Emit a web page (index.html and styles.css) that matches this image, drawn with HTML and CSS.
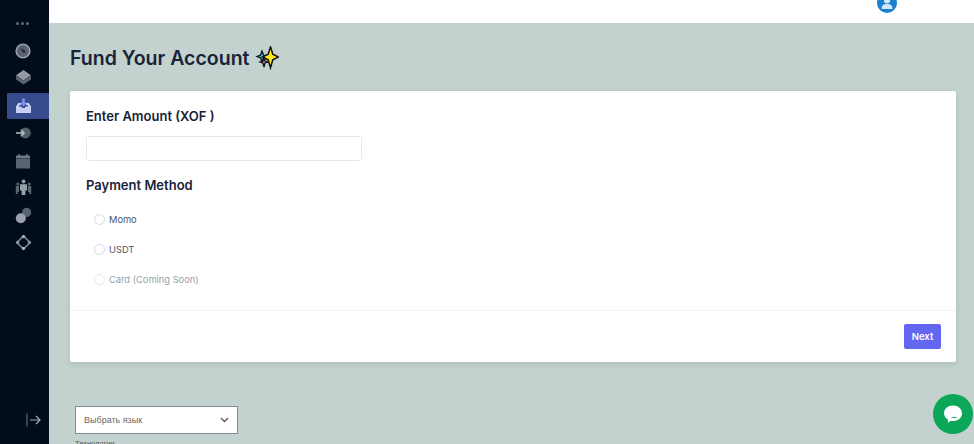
FILE: index.html
```html
<!DOCTYPE html>
<html lang="en">
<head>
    <meta charset="UTF-8">
    <meta name="viewport" content="width=device-width, initial-scale=1.0">
    <title>Fund Your Account</title>
    <link rel="stylesheet" href="styles.css">
</head>
<body>
    <aside class="sidebar">
        <div class="dots"><span></span><span></span><span></span></div>
        <nav class="nav">
            <a class="nav-item">
                <svg width="16" height="16" viewBox="0 0 16 16"><circle cx="8" cy="8" r="6.8" fill="#59626e" stroke="#98a1ab" stroke-width="1.6"/><path d="M5.5 5.2 9.6 7.2 10.4 10 7.6 9.2Z" fill="#1f2a38"/></svg>
            </a>
            <a class="nav-item">
                <svg width="17" height="17" viewBox="0 0 17 17"><path d="M8.5 1 16 6.2 8.5 11.4 1 6.2Z" fill="#929ba6"/><path d="M1 6.6 8.5 11.6 16 6.6V10.4L8.5 15.6 1 10.4Z" fill="#5a6470"/></svg>
            </a>
            <a class="nav-item active">
                <svg width="17" height="16" viewBox="0 0 17 16"><path d="M1 8.5 3.2 5H6V7H4.5L3.8 8.5H6.2L7.2 10H9.8L10.8 8.5H13.2L12.5 7H11V5H13.8L16 8.5V15H1Z" fill="#c9d0f5"/><path d="M7.2 0.5H9.8V4.5H12L8.5 8.5 5 4.5H7.2Z" fill="#7f90ee"/></svg>
            </a>
            <a class="nav-item">
                <svg width="17" height="14" viewBox="0 0 17 14"><circle cx="10.5" cy="7" r="5.4" fill="#545e6a"/><path d="M1 7H9M6 3.8 9.2 7 6 10.2" fill="none" stroke="#b4bbc4" stroke-width="1.5"/></svg>
            </a>
            <a class="nav-item">
                <svg width="16" height="16" viewBox="0 0 16 16"><path d="M1 2.5H3.5V1H5V2.5H11V1H12.5V2.5H15V5.4H1Z" fill="#717a86"/><rect x="1" y="6" width="14" height="9.5" fill="#5a6470"/></svg>
            </a>
            <a class="nav-item">
                <svg width="17" height="17" viewBox="0 0 17 17"><circle cx="8.5" cy="2.4" r="2" fill="#8f98a3"/><circle cx="2.8" cy="5" r="1.5" fill="#5d6773"/><circle cx="14.2" cy="5" r="1.5" fill="#5d6773"/><path d="M0.8 7H4V13H2.6V15H0.8Z M12.9 7H16.2V15H14.4V13H12.9Z" fill="#5d6773"/><path d="M5 5.2H12V11.5H10.4V16H6.6V11.5H5Z" fill="#98a1ab"/></svg>
            </a>
            <a class="nav-item">
                <svg width="17" height="17" viewBox="0 0 17 17"><circle cx="11.6" cy="5.4" r="4.6" fill="#59636f"/><circle cx="5.8" cy="11.2" r="5" fill="#98a1ab"/></svg>
            </a>
            <a class="nav-item">
                <svg width="17" height="17" viewBox="0 0 17 17"><path d="M8.5 2 15 8.5 8.5 15 2 8.5Z" fill="none" stroke="#7d8691" stroke-width="1.6"/><circle cx="8.5" cy="2.6" r="1.7" fill="#aab2bb"/><circle cx="2.6" cy="8.5" r="1.7" fill="#8d96a1"/><circle cx="14.4" cy="8.5" r="1.7" fill="#8d96a1"/><circle cx="8.5" cy="14.4" r="1.7" fill="#aab2bb"/></svg>
            </a>
        </nav>
        <div class="collapse">
            <svg width="16" height="14" viewBox="0 0 16 14"><path d="M1 0.5V13.5" stroke="#5f6a78" stroke-width="1.2"/><path d="M4 7H14M10 3 14 7 10 11" fill="none" stroke="#a3abb5" stroke-width="1.2"/></svg>
        </div>
    </aside>

    <div class="page">
        <header class="topbar">
            <div class="avatar">
                <svg width="20" height="20" viewBox="0 0 20 20"><circle cx="10" cy="10" r="10" fill="#1a80d0"/><circle cx="10" cy="7.5" r="3" fill="#d6e6f4"/><path d="M4.5 16C4.5 12 7 11 10 11S15.500 12 15.500 16Z" fill="#d6e6f4"/></svg>
            </div>
        </header>

        <main class="content">
            <h1 class="title">Fund Your Account
                <svg class="sparkle" width="24" height="24" viewBox="0 0 24 24"><path d="M7 5 8.500 9 12 10.500 8.500 12 7 16 5.500 12 2 10.500 5.500 9Z" fill="#35b8e8" stroke="#111" stroke-width="1.300"/><path d="M9 12 10 15 13 16 10 17 9 21 8 17 5 16 8 15Z" fill="#ea86b8" stroke="#111" stroke-width="1.300"/><path d="M15.500 0.800 17.800 8.200 23.500 11 17.800 13.800 15.500 21.800 13.200 13.800 7.500 11 13.200 8.200Z" fill="#ffe81f" stroke="#111" stroke-width="1.500"/></svg>
            </h1>

            <section class="card">
                <div class="card-body">
                    <h2 class="label">Enter Amount (XOF )</h2>
                    <input class="amount" type="text">
                    <h2 class="label method">Payment Method</h2>
                    <div class="options">
                        <label class="option"><span class="radio"></span>Momo</label>
                        <label class="option"><span class="radio"></span>USDT</label>
                        <label class="option disabled"><span class="radio"></span>Card (Coming Soon)</label>
                    </div>
                </div>
                <div class="card-footer">
                    <button class="next">Next</button>
                </div>
            </section>

            <div class="lang">
                <div class="select">
                    <span>Выбрать язык</span>
                    <svg width="9" height="6" viewBox="0 0 9 6"><path d="M1 1 4.500 4.500 8 1" fill="none" stroke="#555" stroke-width="1.300"/></svg>
                </div>
                <div class="powered">Технологии</div>
            </div>
        </main>
    </div>

    <div class="chat">
        <svg width="24" height="24" viewBox="0 0 24 24"><path d="M12 3.500C17 3.500 21 6.800 21 11.200S17.300 19 12 19C11.200 19 10.500 18.900 9.800 18.700L6.800 20.800 7 17.400C4.500 16 3 13.800 3 11.200 3 6.800 7 3.500 12 3.500Z" fill="#fff"/><path d="M10 15H16C15 16.300 11.500 16.300 10 15Z" fill="#0aa858"/></svg>
    </div>
</body>
</html>
```

FILE: styles.css
```css
* {
    box-sizing: border-box;
}
html, body {
    height: 444px;
    overflow: hidden;
}
body {
    margin: 0;
    display: flex;
    background-color: #c3d2cf;
    font-family: Inter, "Liberation Sans", sans-serif;
    color: #1a2338;
}
.sidebar {
    width: 49px;
    height: 444px;
    flex-shrink: 0;
    background-color: #020c1a;
    padding-top: 22px;
    padding-left: 7px;
    display: flex;
    flex-direction: column;
}
.dots {
    height: 3px;
    margin-left: 9px;
    display: flex;
    gap: 2px;
}
.dots span {
    width: 3px;
    height: 3px;
    border-radius: 50%;
    background-color: #5b6b80;
}
.nav {
    margin-top: 12px;
    display: flex;
    flex-direction: column;
}
.nav-item {
    height: 27.3px;
    width: 42px;
    padding-right: 10px;
    display: flex;
    align-items: center;
    justify-content: center;
}
.nav-item.active {
    height: 26px;
    margin: 1px 0;
    background-color: #364a8c;
    border-radius: 1px 0 0 1px;
}
.collapse {
    margin-top: auto;
    margin-bottom: 13px;
    margin-left: 19px;
}
.page {
    flex: 1;
    min-width: 0;
}
.topbar {
    height: 23px;
    background-color: #fff;
    padding-left: 828px;
    overflow: hidden;
}
.avatar {
    margin-top: -7px;
    height: 20px;
}
.content {
    padding: 0 18px 0 21px;
}
.title {
    margin: 0;
    padding-top: 2px;
    height: 68px;
    font-size: 19.500px;
    line-height: 28px;
    font-weight: 600;
    display: flex;
    align-items: center;
    gap: 6px;
}
.card {
    height: 271px;
    background-color: #fff;
    border-radius: 2px;
    box-shadow: 0 2px 6px rgba(0, 0, 0, 0.1);
}
.card-body {
    height: 220px;
    padding: 16px 16px 0;
    border-bottom: 1px solid #f1f1f6;
}
.label {
    margin: 0;
    font-size: 13px;
    line-height: 18px;
    font-weight: 600;
}
.amount {
    display: block;
    width: 276px;
    height: 25px;
    margin-top: 11px;
    border: 1px solid #e6e9f0;
    border-radius: 3px;
    background-color: #fff;
}
.method {
    margin-top: 15px;
}
.options {
    margin-top: 10px;
    display: flex;
    flex-direction: column;
}
.option {
    height: 30px;
    padding-left: 8px;
    display: flex;
    align-items: center;
    gap: 4px;
    font-size: 9.300px;
    color: #4d5665;
}
.option.disabled {
    color: #9aa1ac;
}
.radio {
    width: 11px;
    height: 11px;
    border: 1px solid #d5dae3;
    border-radius: 50%;
}
.option.disabled .radio {
    border-color: #e6e9ef;
}
.card-footer {
    padding: 13px 15px 0 0;
    display: flex;
    justify-content: flex-end;
}
.next {
    width: 37px;
    height: 25px;
    padding: 0;
    border: none;
    border-radius: 2px;
    background-color: #6366f1;
    color: #fff;
    font-family: Inter, "Liberation Sans", sans-serif;
    font-size: 9.500px;
    font-weight: 600;
}
.lang {
    margin-top: 44px;
    margin-left: 5px;
}
.select {
    width: 163px;
    height: 28px;
    padding: 0 8px;
    background-color: #fff;
    border: 1px solid #848b91;
    display: flex;
    align-items: center;
    justify-content: space-between;
    font-family: "Liberation Sans", Arial, sans-serif;
    font-size: 9px;
    color: #666;
}
.powered {
    margin-top: 5px;
    font-family: "Liberation Sans", Arial, sans-serif;
    font-size: 7.500px;
    color: #555;
}
.chat {
    position: fixed;
    left: 933px;
    top: 394px;
    width: 40px;
    height: 40px;
    border-radius: 50%;
    background-color: #0aa858;
    display: flex;
    align-items: center;
    justify-content: center;
}
```
